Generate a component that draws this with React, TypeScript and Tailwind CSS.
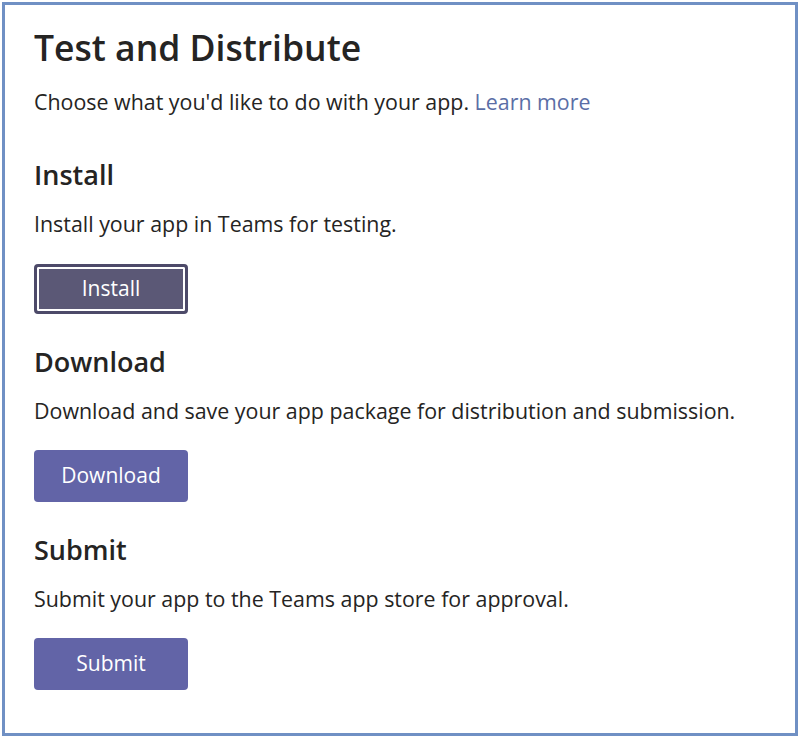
import React from "react"

const font = { fontFamily: '"Open Sans", "Noto Sans", Arial, sans-serif' }

type SectionProps = {
  title: string
  text: string
  label: string
  focused?: boolean
}

function Section({ title, text, label, focused }: SectionProps) {
  return (
    <div className="flex flex-col">
      <h2 className="text-[27px] leading-[32px] font-semibold text-[#252423]">{title}</h2>
      <p className="mt-[19px] text-[21.4px] leading-[28px] text-[#252423]">{text}</p>
      {focused ? (
        <button className="mt-[26px] w-[154px] h-[50px] rounded-[4px] border-[3px] border-[#4d4a69] bg-[#5b5876] text-white text-[21px] shadow-[inset_0_0_0_2px_#ffffff]">
          {label}
        </button>
      ) : (
        <button className="mt-[25px] w-[154px] h-[52px] rounded-[4px] bg-[#6264a7] text-white text-[21px]">
          {label}
        </button>
      )}
    </div>
  )
}

export default function App() {
  return (
    <div className="w-[800px] h-[738px] bg-white p-[2px]" style={font}>
      <div className="h-full border-[3px] border-[#7090c4] pl-[29px] pt-[22px]">
        <h1 className="text-[35.5px] leading-[40px] font-semibold text-[#252423]">Test and Distribute</h1>
        <p className="mt-[21px] text-[21.4px] leading-[28px] text-[#252423]">
          Choose what you'd like to do with your app. <span className="text-[#5b6ea6]">Learn more</span>
        </p>
        <div className="mt-[43px] flex flex-col gap-[32px]">
          <Section title="Install" text="Install your app in Teams for testing." label="Install" focused />
          <Section
            title="Download"
            text="Download and save your app package for distribution and submission."
            label="Download"
          />
          <Section title="Submit" text="Submit your app to the Teams app store for approval." label="Submit" />
        </div>
      </div>
    </div>
  )
}
